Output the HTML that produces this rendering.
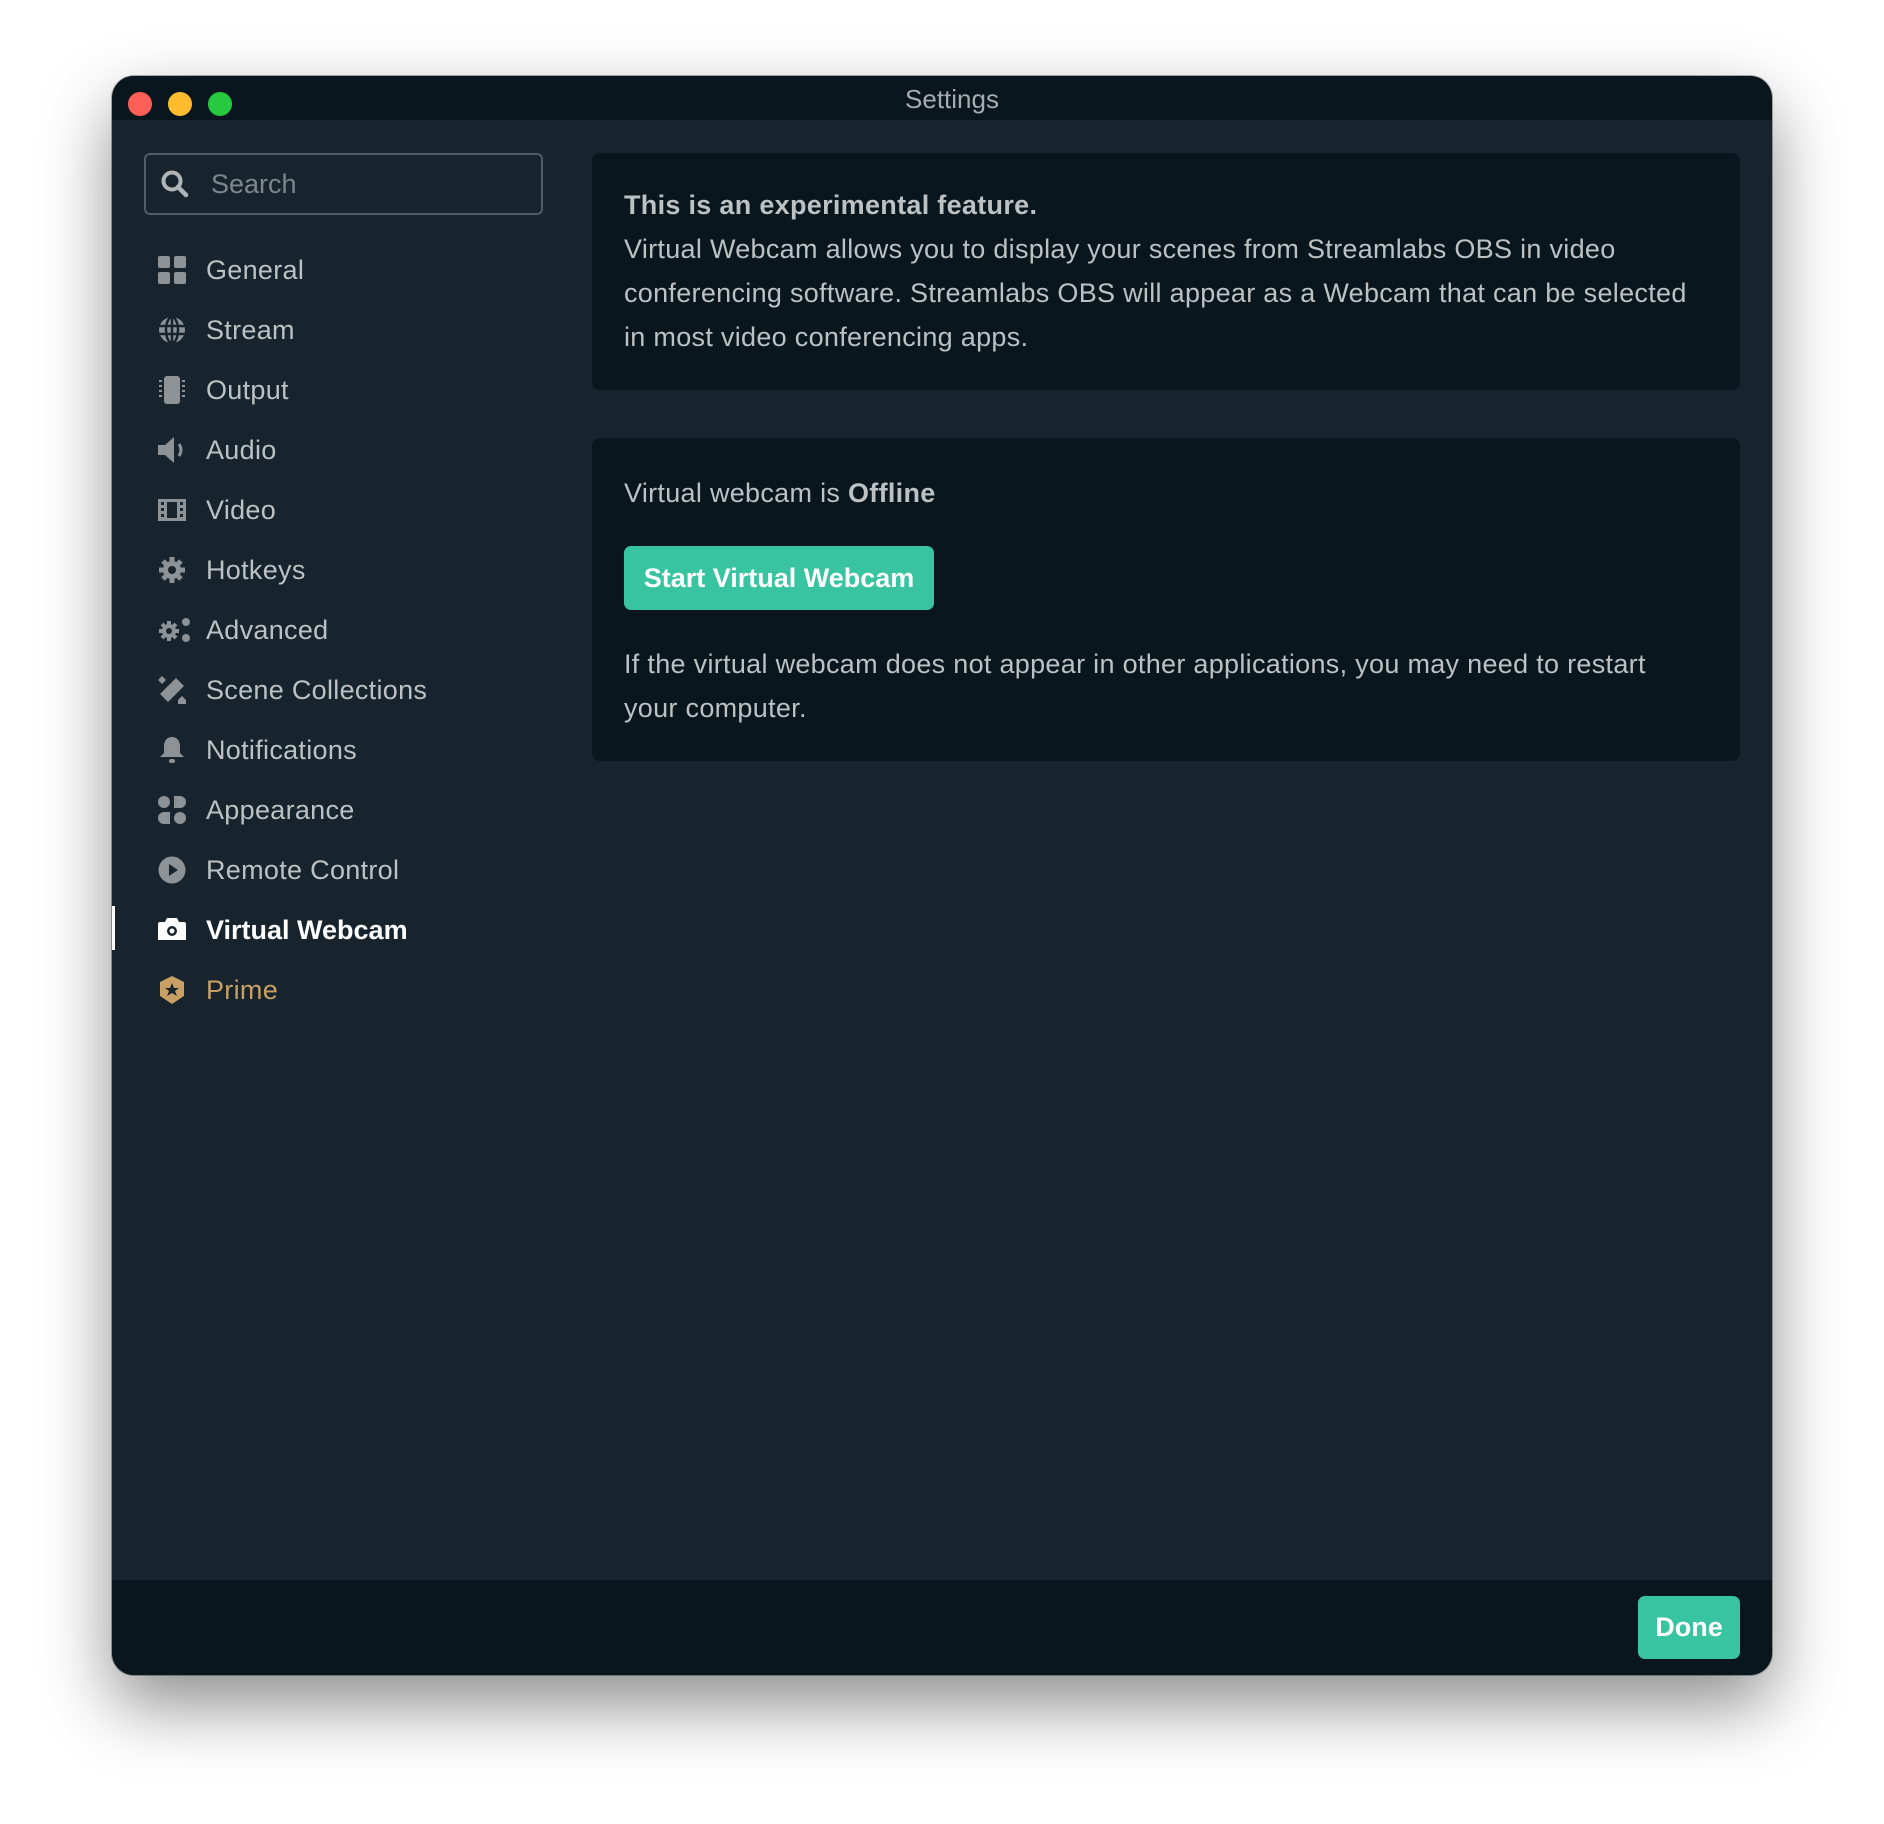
<!DOCTYPE html>
<html><head><meta charset="utf-8"><style>
*{margin:0;padding:0;box-sizing:border-box}
body{width:1884px;height:1824px;background:#fff;font-family:"Liberation Sans",sans-serif;position:relative;overflow:hidden}
.win{position:absolute;left:112px;top:76px;width:1660px;height:1599px;border-radius:22px;background:#17242d;overflow:hidden;box-shadow:0 30px 70px rgba(0,0,0,.45),0 0 0 1px rgba(0,0,0,.3)}
.tb{position:absolute;left:0;top:0;right:0;height:44px;background:#09161d}
.dot{position:absolute;top:16px;width:24px;height:24px;border-radius:50%}
.title{position:absolute;top:8px;width:100%;padding-left:20px;text-align:center;color:#a5abaf;font-size:26px}
.search{position:absolute;left:32px;top:77px;width:399px;height:62px;border:2px solid #4f5d65;border-radius:6px}
.search span{position:absolute;left:65px;top:14px;font-size:27px;color:#7d868b}
.item{position:absolute;left:46px;height:40px;display:flex;align-items:center;font-size:27px;color:#bcc1c3;letter-spacing:.3px}
.item svg{width:28px;height:28px;margin-right:20px;fill:#8c9296}
.panel{position:absolute;left:480px;width:1148px;background:#09161d;border-radius:8px}
.p{font-size:27px;color:#bcc1c3;line-height:44px;letter-spacing:.3px}
.btn{position:absolute;background:#38c3a1;color:#fff;font-weight:bold;font-size:27px;border-radius:7px;display:flex;align-items:center;justify-content:center}
.foot{position:absolute;left:0;right:0;top:1504px;height:95px;background:#09161d}
</style></head><body>
<div class="win">
 <div class="tb">
  <div class="dot" style="left:16px;background:#fe5f57"></div>
  <div class="dot" style="left:56px;background:#febc2e"></div>
  <div class="dot" style="left:96px;background:#28c840"></div>
  <div class="title">Settings</div>
 </div>
 <div class="search"><svg style="position:absolute;left:14px;top:14px" width="30" height="30" viewBox="0 0 30 30"><circle cx="12" cy="12" r="8.5" fill="none" stroke="#b0b5b8" stroke-width="4"/><path d="M18 18l8 8" stroke="#b0b5b8" stroke-width="4.5" stroke-linecap="round"/></svg><span>Search</span></div>

 <div class="item" style="top:174px"><svg viewBox="0 0 28 28"><rect x="0" y="0" width="12" height="12" rx="2"/><rect x="16" y="0" width="12" height="12" rx="2"/><rect x="0" y="16" width="12" height="12" rx="2"/><rect x="16" y="16" width="12" height="12" rx="2"/></svg>General</div>
 <div class="item" style="top:234px"><svg viewBox="0 0 28 28"><circle cx="14" cy="14" r="13"/><path d="M1 10h26M1 18h26M14 1v26" stroke="#17242d" stroke-width="2.5"/><ellipse cx="14" cy="14" rx="6" ry="13" fill="none" stroke="#17242d" stroke-width="2.5"/></svg>Stream</div>
 <div class="item" style="top:294px"><svg viewBox="0 0 28 28"><rect x="6" y="0" width="16" height="28" rx="3"/><path d="M1 5h3M1 10h3M1 15h3M1 20h3M24 5h3M24 10h3M24 15h3M24 20h3" stroke="#8c9296" stroke-width="2"/></svg>Output</div>
 <div class="item" style="top:354px"><svg viewBox="0 0 28 28"><path d="M0 9h7l9-8v26l-9-8H0z"/><path d="M21 8q4 6 0 12" fill="none" stroke="#8c9296" stroke-width="3"/></svg>Audio</div>
 <div class="item" style="top:414px"><svg viewBox="0 0 28 28"><path d="M0 3h28v22H0z M3 6v3h3V6z M3 12v3h3v-3z M3 18v3h3v-3z M22 6v3h3V6z M22 12v3h3v-3z M22 18v3h3v-3z M9 6v16h10V6z" fill-rule="evenodd"/></svg>Video</div>
 <div class="item" style="top:474px"><svg viewBox="0 0 28 28"><circle cx="14" cy="14" r="9"/><path d="M14 1v26M1 14h26M5 5l18 18M23 5L5 23" stroke="#8c9296" stroke-width="5"/><circle cx="14" cy="14" r="4" fill="#17242d"/></svg>Hotkeys</div>
 <div class="item" style="top:534px"><svg viewBox="0 0 34 28" style="width:34px;margin-right:14px"><circle cx="11" cy="15" r="7"/><path d="M11 5v20M1 15h20M4 8l14 14M18 8L4 22" stroke="#8c9296" stroke-width="4"/><circle cx="11" cy="15" r="3" fill="#17242d"/><circle cx="28" cy="6" r="4"/><circle cx="28" cy="22" r="4"/></svg>Advanced</div>
 <div class="item" style="top:594px"><svg viewBox="0 0 28 28"><path d="M2 18L18 2l8 8-16 16z"/><path d="M0 4l4-4 4 4-4 4zM20 24l4-4 4 4v4h-8z"/></svg>Scene Collections</div>
 <div class="item" style="top:654px"><svg viewBox="0 0 28 28"><path d="M14 1c5 0 8 4 8 9v7l4 4H2l4-4v-7c0-5 3-9 8-9z"/><rect x="11" y="23" width="6" height="4" rx="2"/></svg>Notifications</div>
 <div class="item" style="top:714px"><svg viewBox="0 0 28 28"><circle cx="6" cy="6" r="6"/><path d="M16 0h6a6 6 0 010 12h-6z"/><path d="M12 16v12H6a6 6 0 010-12z"/><circle cx="22" cy="22" r="6"/></svg>Appearance</div>
 <div class="item" style="top:774px"><svg viewBox="0 0 28 28"><circle cx="14" cy="14" r="13.5"/><path d="M11 8l9 6-9 6z" fill="#17242d"/></svg>Remote Control</div>
 <div style="position:absolute;left:0;top:830px;width:3px;height:44px;background:#fff"></div>
 <div class="item" style="top:834px;color:#fff;font-weight:bold;letter-spacing:0"><svg viewBox="0 0 28 28" style="fill:#fff"><path d="M0 8a2 2 0 012-2h5l2-4h10l2 4h5a2 2 0 012 2v16H0z"/><circle cx="14" cy="15" r="5" fill="#17242d"/><circle cx="14" cy="15" r="2.5" fill="#fff"/></svg>Virtual Webcam</div>
 <div class="item" style="top:894px;color:#c9a063"><svg viewBox="0 0 28 28" style="fill:#c9a063"><path d="M14 0l12 6v14l-12 8-12-8V6z"/><path d="M14 7l2 5h5l-4 3 2 5-5-3-5 3 2-5-4-3h5z" fill="#17242d"/></svg>Prime</div>

 <div class="panel" style="top:77px;height:237px;padding:30px 32px">
  <div class="p" style="width:1092px"><b>This is an experimental feature.</b><br>Virtual Webcam allows you to display your scenes from Streamlabs OBS in video conferencing software. Streamlabs OBS will appear as a Webcam that can be selected in most video conferencing apps.</div>
 </div>
 <div class="panel" style="top:362px;height:323px">
  <div class="p" style="position:absolute;left:32px;top:33px">Virtual webcam is <b>Offline</b></div>
  <div class="btn" style="left:32px;top:108px;width:310px;height:64px">Start Virtual Webcam</div>
  <div class="p" style="position:absolute;left:32px;top:204px;width:1075px">If the virtual webcam does not appear in other applications, you may need to restart your computer.</div>
 </div>
 <div class="foot"><div class="btn" style="left:1526px;top:16px;width:102px;height:63px">Done</div></div>
</div>
</body></html>
